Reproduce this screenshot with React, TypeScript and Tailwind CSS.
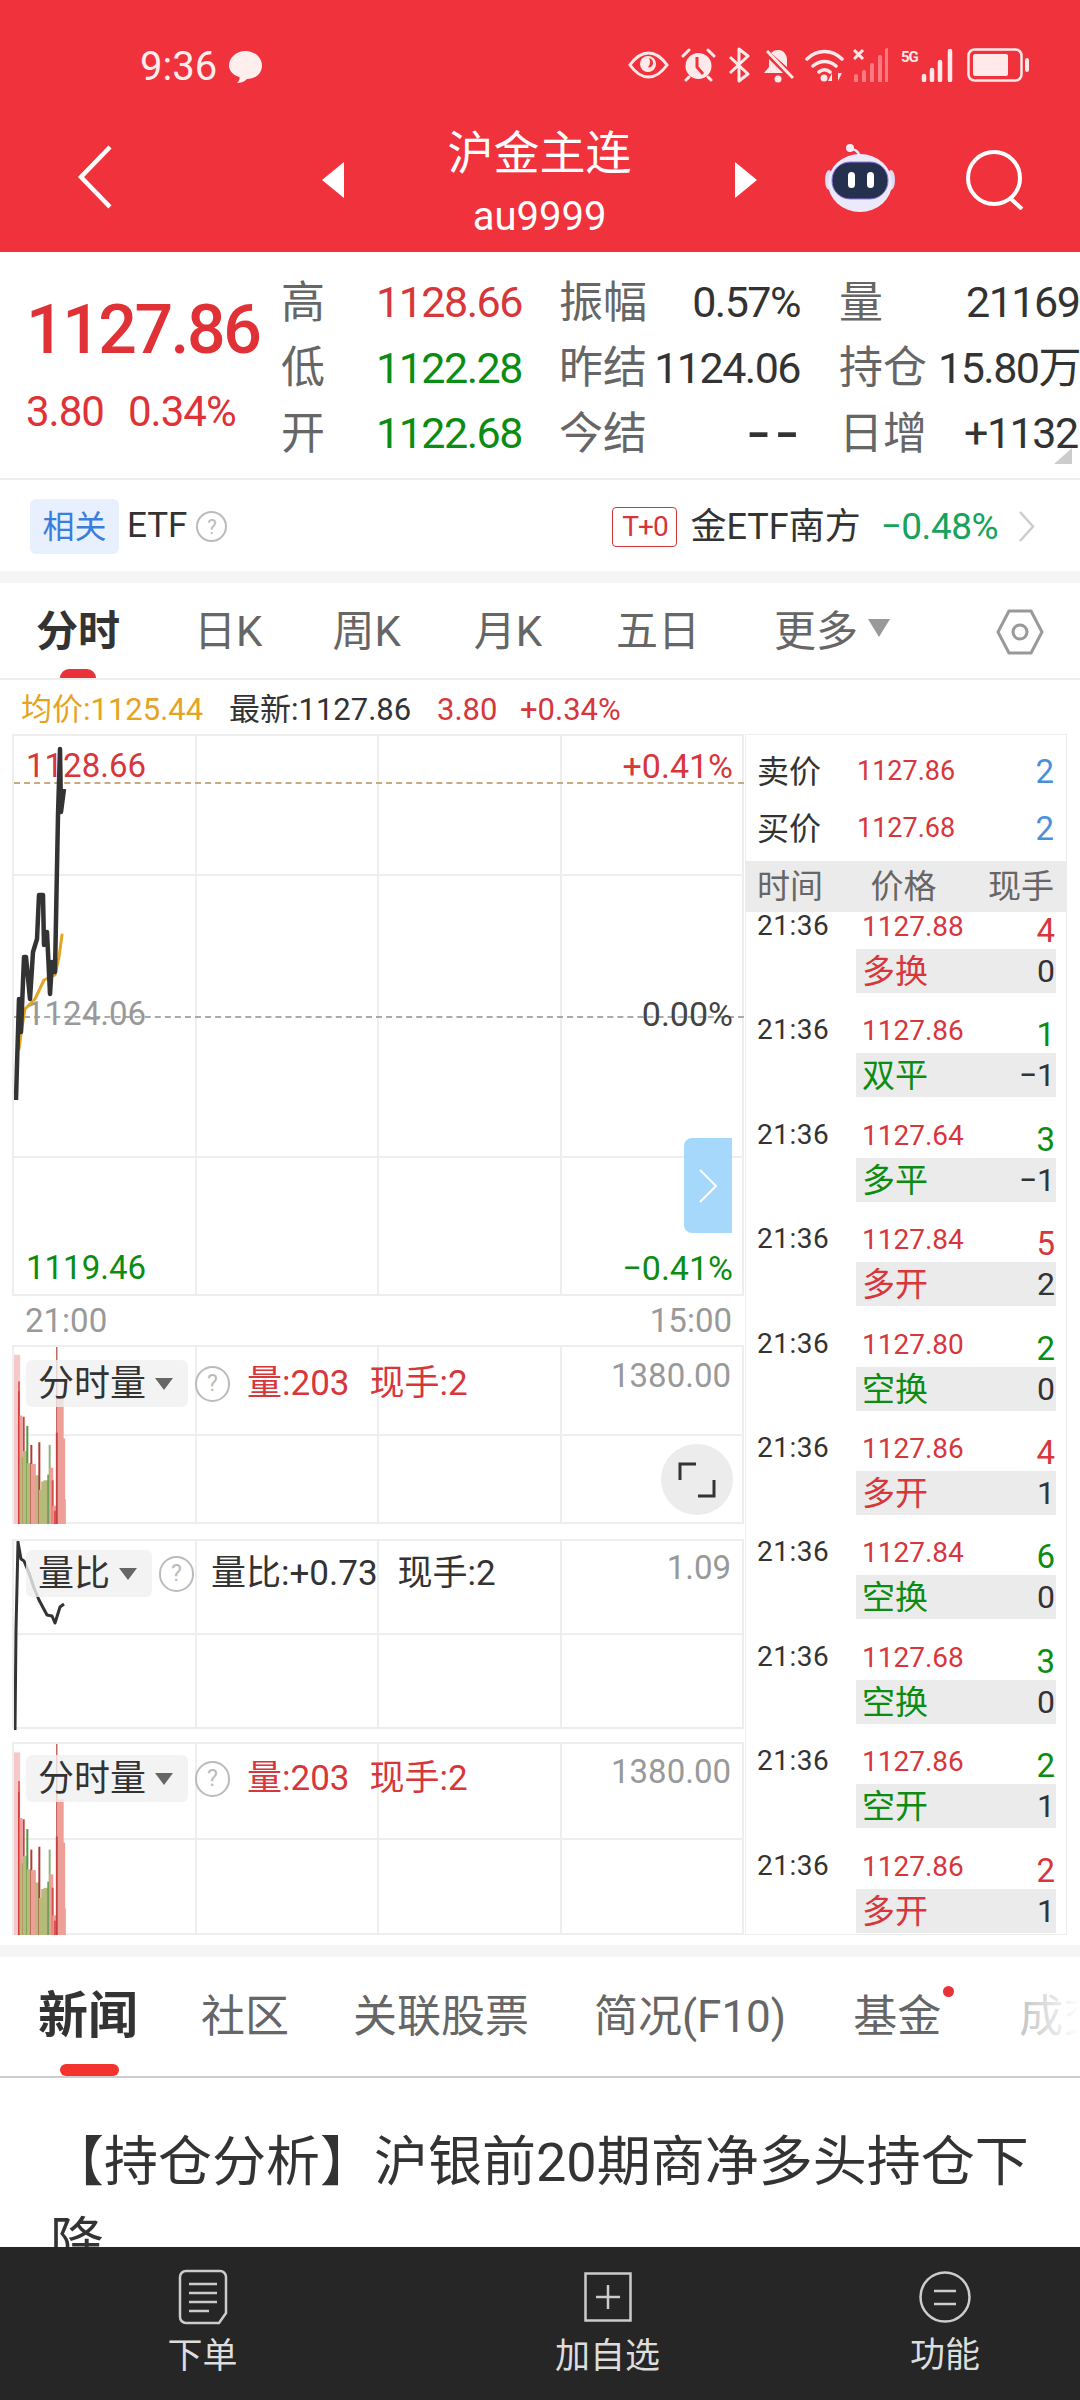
import React from 'react';

const RED = 'text-[#d7363b]';
const GREEN = 'text-[#0b8c12]';

const volBars: [number, number, string, number][] = [
  [44, 35, '#f6c9c9', 7],
  [51, 105, '#e2686a', 2],
  [55, 195, '#ee9f97', 4],
  [60, 305, '#b6bb7c', 5],
  [65, 198, '#c9403f', 2],
  [70, 288, '#b6bb7c', 5],
  [76, 222, '#4f9a42', 2],
  [82, 320, '#b6bb7c', 5],
  [88, 272, '#b23a3a', 2],
  [94, 322, '#ee9f97', 5],
  [100, 365, '#ee9f97', 4],
  [105, 352, '#b6bb7c', 4],
  [112, 265, '#b23a3a', 2],
  [118, 390, '#b6bb7c', 5],
  [125, 368, '#b6bb7c', 5],
  [132, 365, '#b6bb7c', 5],
  [139, 350, '#5d9a4a', 2],
  [143, 272, '#8fb27a', 2],
  [148, 332, '#ee9f97', 4],
  [152, 365, '#d8544f', 2],
  [157, 432, '#ee9f97', 4],
  [163, 445, '#e2504f', 5],
  [169, 240, '#e2504f', 5],
  [176, 150, '#ee9f97', 6],
  [182, 255, '#ee9f97', 5],
  [187, 415, '#ee9f97', 3],
];

const ticks = [
  { time: '21:36', price: '1127.88', qty: '4', qtyColor: RED, tag: '多换', tagColor: RED, change: '0' },
  { time: '21:36', price: '1127.86', qty: '1', qtyColor: GREEN, tag: '双平', tagColor: GREEN, change: '−1' },
  { time: '21:36', price: '1127.64', qty: '3', qtyColor: GREEN, tag: '多平', tagColor: GREEN, change: '−1' },
  { time: '21:36', price: '1127.84', qty: '5', qtyColor: RED, tag: '多开', tagColor: RED, change: '2' },
  { time: '21:36', price: '1127.80', qty: '2', qtyColor: GREEN, tag: '空换', tagColor: GREEN, change: '0' },
  { time: '21:36', price: '1127.86', qty: '4', qtyColor: RED, tag: '多开', tagColor: RED, change: '1' },
  { time: '21:36', price: '1127.84', qty: '6', qtyColor: GREEN, tag: '空换', tagColor: GREEN, change: '0' },
  { time: '21:36', price: '1127.68', qty: '3', qtyColor: GREEN, tag: '空换', tagColor: GREEN, change: '0' },
  { time: '21:36', price: '1127.86', qty: '2', qtyColor: GREEN, tag: '空开', tagColor: GREEN, change: '1' },
  { time: '21:36', price: '1127.86', qty: '2', qtyColor: RED, tag: '多开', tagColor: RED, change: '1' },
];

const statRows = [
  { a: '高', av: '1128.66', ac: RED, b: '振幅', bv: '0.57%', bc: 'text-[#333333]', c: '量', cw: 'w-[127px]', cv: '21169' },
  { a: '低', av: '1122.28', ac: GREEN, b: '昨结', bv: '1124.06', bc: 'text-[#333333]', c: '持仓', cw: 'w-[99px]', cv: '15.80万' },
  { a: '开', av: '1122.68', ac: GREEN, b: '今结', bv: '--', bc: 'mr-[-3px] inline-block origin-right scale-x-[1.5] font-bold tracking-[2px] text-[#333333]', c: '日增', cw: 'w-[125px]', cv: '+1132' },
];

const StatusIcons = () => (
  <div className="flex items-center text-[#ffe9e9]">
    <svg width="41" height="28" viewBox="0 0 41 28" fill="none">
      <path d="M2 14C9 4 15 2 20.500 2S32 4 39 14C32 24 26 26 20.500 26S9 24 2 14Z" stroke="currentColor" strokeWidth="3" />
      <circle cx="20" cy="13" r="8" fill="currentColor" />
      <path d="M21 7c4 1 5 5 3 8-1 1-3 2-4 1 2-2 3-5 1-9Z" fill="#f0323c" />
    </svg>
    <svg className="ml-[12px]" width="35" height="34" viewBox="0 0 35 34" fill="none">
      <circle cx="17.500" cy="18" r="13" fill="currentColor" />
      <path d="M16 9v10l6 7" stroke="#f0323c" strokeWidth="3" />
      <path d="M2 8l6-6M33 8l-6-6M5 32l3-3M30 32l-3-3" stroke="currentColor" strokeWidth="3" strokeLinecap="round" />
    </svg>
    <svg className="ml-[12px]" width="22" height="36" viewBox="0 0 22 36" fill="none">
      <path d="M2 10l18 17-9 7V2l9 7L2 26" stroke="currentColor" strokeWidth="3" strokeLinejoin="round" />
    </svg>
    <svg className="ml-[13px]" width="31" height="35" viewBox="0 0 31 35" fill="none">
      <path d="M15 2c6 0 9 5 9 10v7l-16-14c2-2 4-3 7-3ZM6 11v8l-5 6h19Z" fill="currentColor" />
      <circle cx="15" cy="31" r="3.500" fill="currentColor" />
      <path d="M4 3l26 27" stroke="currentColor" strokeWidth="3" />
    </svg>
    <svg className="ml-[11px]" width="39" height="34" viewBox="0 0 39 34" fill="none">
      <path d="M2 11c10-10 25-10 35 0M8 18c7-6 16-6 23 0M14 24c3-3 8-3 11 0" stroke="currentColor" strokeWidth="3.500" strokeLinecap="round" />
      <circle cx="19" cy="30" r="3.500" fill="currentColor" />
      <path d="M27 33v-8l-4 8ZM33 25v8l4-8Z" fill="currentColor" />
    </svg>
    <svg className="ml-[9px]" width="35" height="34" viewBox="0 0 35 34" fill="none">
      <path d="M1 2l9 9M10 2l-9 9" stroke="currentColor" strokeWidth="3" />
      <path d="M3 28v5M11 24v9M19 17v16M27 9v24M34 2v31" stroke="#ff7a80" strokeWidth="4" strokeLinecap="round" />
    </svg>
    <span className="ml-[13px] mt-[-16px] w-[19px] text-[15px] font-bold leading-[18px] tracking-[-1px]">5G</span>
    <svg className="ml-[1px]" width="33" height="34" viewBox="0 0 33 34" fill="none">
      <path d="M3 28v4M11 22v10M19 14v18M29 3v29" stroke="currentColor" strokeWidth="4.500" strokeLinecap="round" />
    </svg>
    <svg className="ml-[13px]" width="63" height="34" viewBox="0 0 63 34" fill="none">
      <rect x="1.500" y="1.500" width="53" height="31" rx="6" stroke="currentColor" strokeWidth="2.500" />
      <rect x="6" y="6" width="35" height="22" rx="2" fill="currentColor" />
      <rect x="58" y="10" width="4" height="14" rx="2" fill="currentColor" />
    </svg>
  </div>
);

const Robot = () => (
  <svg width="72" height="70" viewBox="0 0 72 70" fill="none">
    <path d="M36 16c0-6-3-9-8-10" stroke="#e8e6f8" strokeWidth="2.500" />
    <circle cx="26" cy="5" r="4" fill="#f1effc" />
    <ellipse cx="5" cy="37" rx="4" ry="10" fill="#dcdcf4" />
    <ellipse cx="67" cy="37" rx="4" ry="10" fill="#dcdcf4" />
    <ellipse cx="36" cy="40" rx="32" ry="29" fill="#eceafa" />
    <rect x="8" y="19" width="56" height="37" rx="18" fill="#25304f" stroke="#8f7be0" strokeWidth="1" />
    <rect x="24" y="29" width="7" height="16" rx="3.500" fill="#ffffff" />
    <rect x="43" y="29" width="7" height="16" rx="3.500" fill="#ffffff" />
  </svg>
);

const HelpMark = () => (
  <span className="flex h-[36px] w-[35px] shrink-0 items-center justify-center rounded-full border-2 border-[#bbbbbb] text-[23px] leading-none text-[#bbbbbb]">?</span>
);

const GridLines = ({ rows, rowsClass }: { rows: number; rowsClass: string }) => (
  <div className={`grid h-full grid-cols-4 ${rowsClass}`}>
    {Array.from({ length: rows * 4 }).map((_, i) => (
      <div key={i} className="border-r-2 border-b-2 border-[#eeeeee]" />
    ))}
  </div>
);

const VolumeBars = ({ height }: { height: number }) => (
  <svg className="absolute left-0 top-0" width="70" height={height} viewBox={`12 0 70 ${height}`} fill="none">
    {volBars.map(([x, top, color, w], i) => {
      const barH = ((480 - top) / 2.6 / 179) * height;
      return <rect key={i} x={x / 3 - w / 2} y={height - barH} width={w} height={barH} fill={color} />;
    })}
    <rect x="16" y={height * 0.25} width="1.500" height={height * 0.75} fill="#d8393c" />
    <rect x="54" y="0" width="1.500" height={height} fill="#b8403f" fillOpacity="0.8" />
  </svg>
);

const VolumeHead = ({ name, headClass, pillClass, label, value, valueColor, helpClass }: { name: string; headClass: string; pillClass: string; label: string; value: string; valueColor: string; helpClass: string }) => (
  <div className={`absolute left-[12px] flex items-center ${headClass}`}>
    <div className={`flex h-[47px] items-center rounded-[6px] bg-[#f0f0f0]/80 pl-[12px] text-[36px] text-[#333333] ${pillClass}`}>
      {name}
      <span className="ml-[9px] h-0 w-0 border-x-[9px] border-t-[12px] border-x-transparent border-t-[#666666]" />
    </div>
    <div className={helpClass}>
      <HelpMark />
    </div>
    <span className={`ml-[17px] text-[35px] leading-[47px] ${valueColor}`}>{label}</span>
    <span className={`ml-[20px] text-[35px] leading-[47px] ${valueColor}`}>{value}</span>
  </div>
);

const MainChart = () => (
  <div className="relative h-[562px] w-[732px] border-t-2 border-l-2 border-[#eeeeee]">
    <GridLines rows={3} rowsClass="grid-rows-[140px_282px_138px]" />
    <div className="absolute left-0 right-0 top-[46px] border-t-2 border-dashed border-[#c9aa80]" />
    <div className="absolute left-0 right-0 top-[280px] border-t-2 border-dashed border-[#aaaaaa]" />
    <span className={`absolute left-[12px] top-[10px] text-[33px] leading-[40px] ${RED}`}>1128.66</span>
    <span className={`absolute right-[11px] top-[10px] text-[34px] leading-[40px] ${RED}`}>+0.41%</span>
    <span className="absolute left-[12px] top-[258px] text-[33px] leading-[40px] text-[#999999]">1124.06</span>
    <span className="absolute right-[11px] top-[258px] text-[34px] leading-[40px] text-[#444444]">0.00%</span>
    <span className={`absolute left-[12px] top-[512px] text-[33px] leading-[40px] ${GREEN}`}>1119.46</span>
    <span className={`absolute right-[11px] top-[512px] text-[34px] leading-[40px] ${GREEN}`}>−0.41%</span>
    <svg className="absolute left-0 top-0" width="70" height="400" viewBox="12 734 70 400" fill="none">
      <path d="M17 1047L20 1025L23 1007L33 997L42 978L53 973L57 955L60 933" stroke="#e2a526" strokeWidth="3" strokeLinejoin="round" strokeLinecap="round" />
      <path d="M14 1098L15 1063L17 997L19 1030L22 955L24 955L28 997L31 950L35 937L37 893L41 893L42 943L45 930L48 992L50 960L53 970L56 813L58 747L59 810L62 787" stroke="#333333" strokeWidth="4.500" strokeLinejoin="round" />
    </svg>
    <div className="absolute left-[670px] top-[402px] flex h-[95px] w-[48px] items-center justify-center rounded-l-[8px] bg-[#a6d8fb]">
      <svg width="20" height="36" viewBox="0 0 20 36" fill="none">
        <path d="M2 2l16 16L2 34" stroke="#ffffff" strokeWidth="2" />
      </svg>
    </div>
  </div>
);

const LeftColumn = () => (
  <div className="w-[745px] shrink-0 pl-[12px]">
    <MainChart />
    <div className="flex h-[49px] w-[732px] items-center justify-between pl-[13px] pr-[12px] text-[33px] text-[#999999]">
      <span>21:00</span>
      <span>15:00</span>
    </div>
    <div className="relative h-[179px] w-[732px] border-t-2 border-l-2 border-[#eeeeee]">
      <GridLines rows={2} rowsClass="grid-rows-2" />
      <VolumeBars height={177} />
      <VolumeHead name="分时量" headClass="top-[13px]" pillClass="w-[162px]" label="量:203" value="现手:2" valueColor={RED} helpClass="ml-[7px]" />
      <span className="absolute right-[13px] top-[12px] text-[33px] leading-[34px] text-[#999999]">1380.00</span>
      <div className="absolute left-[647px] top-[97px] flex h-[71px] w-[72px] items-center justify-center rounded-full bg-[#ececec]">
        <svg width="38" height="36" viewBox="0 0 38 36" fill="none">
          <path d="M2 18V2h16M36 18v16H20" stroke="#333333" strokeWidth="3" />
        </svg>
      </div>
    </div>
    <div className="relative mt-[15px] h-[190px] w-[732px] border-t-2 border-l-2 border-[#eeeeee]">
      <GridLines rows={2} rowsClass="grid-rows-2" />
      <svg className="absolute left-0 top-0" width="70" height="190" viewBox="12 1539 70 190" fill="none">
        <path d="M13 1728L14 1628L16 1540L19 1557L22 1559L27 1571L32 1586L37 1598L45 1613L50 1614L53 1621L58 1605L62 1602" stroke="#333333" strokeWidth="3" strokeLinejoin="round" />
      </svg>
      <VolumeHead name="量比" headClass="top-[9px]" pillClass="w-[126px]" label="量比:+0.73" value="现手:2" valueColor="text-[#333333]" helpClass="ml-[7px]" />
      <span className="absolute right-[13px] top-[10px] text-[33px] leading-[34px] text-[#999999]">1.09</span>
    </div>
    <div className="relative mt-[13px] h-[193px] w-[732px] border-t-2 border-l-2 border-[#eeeeee]">
      <GridLines rows={2} rowsClass="grid-rows-2" />
      <VolumeBars height={191} />
      <VolumeHead name="分时量" headClass="top-[11px]" pillClass="w-[162px]" label="量:203" value="现手:2" valueColor={RED} helpClass="ml-[7px]" />
      <span className="absolute right-[13px] top-[11px] text-[33px] leading-[34px] text-[#999999]">1380.00</span>
    </div>
  </div>
);

const TradePanel = () => (
  <div className="h-[1201px] w-[322px] shrink-0 overflow-hidden border border-[#eeeeee]">
    <div className="h-[126px] pt-[8px]">
      <div className="flex h-[57px] items-center pl-[11px] pr-[12px]">
        <span className="w-[100px] text-[32px] text-[#333333]">卖价</span>
        <span className={`flex-1 text-[27px] ${RED}`}>1127.86</span>
        <span className="text-[33px] text-[#4a90d9]">2</span>
      </div>
      <div className="flex h-[57px] items-center pl-[11px] pr-[12px]">
        <span className="w-[100px] text-[32px] text-[#333333]">买价</span>
        <span className={`flex-1 text-[27px] ${RED}`}>1127.68</span>
        <span className="text-[33px] text-[#4a90d9]">2</span>
      </div>
    </div>
    <div className="flex h-[51px] items-center justify-between bg-[#ebebeb] pl-[11px] pr-[12px] text-[33px] text-[#666666]">
      <span>时间</span>
      <span className="ml-[-4px]">价格</span>
      <span>现手</span>
    </div>
    {ticks.map((t, i) => (
      <div key={i} className="h-[104.400px]">
        <div className="flex h-[37px] items-start pl-[11px] pr-[11px]">
          <span className="w-[105px] text-[28px] leading-[28px] tracking-[0.5px] text-[#333333]">{t.time}</span>
          <span className={`flex-1 text-[28px] leading-[30px] ${RED}`}>{t.price}</span>
          <span className={`mt-[2px] text-[33px] leading-[34px] ${t.qtyColor}`}>{t.qty}</span>
        </div>
        <div className="ml-[110px] mr-[10px] flex h-[44px] items-center justify-between bg-[#ebebeb] pl-[6px] pr-[1px]">
          <span className={`mt-[2px] text-[33px] leading-[44px] ${t.tagColor}`}>{t.tag}</span>
          <span className="text-[32px] leading-[44px] text-[#333333]">{t.change}</span>
        </div>
      </div>
    ))}
  </div>
);

export default function App() {
  return (
    <div className="relative flex h-[2400px] w-[1080px] flex-col overflow-hidden bg-white font-['Roboto','Noto_Sans_CJK_SC',sans-serif]">
      <header className="h-[252px] shrink-0 bg-[#f0323c] text-white">
        <div className="flex h-[130px] items-center justify-between pl-[140px] pr-[50px]">
          <div className="mt-[3px] flex items-center text-[#ffeeee]">
            <span className="text-[40px] leading-none">9:36</span>
            <svg className="ml-[11px]" width="35" height="34" viewBox="0 0 35 34">
              <path d="M17.500 1C27 1 34 8 34 15.500C34 24 27 29 19 29C16 32 12 33 9 33C11 31 12 29 11.500 27C5 25 1 21 1 15.500C1 8 8 1 17.500 1Z" fill="currentColor" />
            </svg>
          </div>
          <StatusIcons />
        </div>
        <div className="flex h-[122px] items-start">
          <svg className="ml-[77px] mt-[15px] shrink-0" width="36" height="64" viewBox="0 0 36 64" fill="none">
            <path d="M33 2L4 32l29 30" stroke="#ffffff" strokeWidth="4.500" />
          </svg>
          <span className="ml-[209px] mt-[32px] h-0 w-0 border-y-[18px] border-r-[22px] border-y-transparent border-r-white" />
          <div className="mt-[-5px] flex w-[391px] flex-col items-center">
            <span className="text-[46px] leading-[56px]">沪金主连</span>
            <span className="mt-[8px] text-[40px] leading-[56px]">au9999</span>
          </div>
          <span className="mt-[32px] h-0 w-0 border-y-[18px] border-l-[22px] border-y-transparent border-l-white" />
          <div className="ml-[67px] mt-[13px]">
            <Robot />
          </div>
          <svg className="ml-[70px] mt-[20px]" width="60" height="60" viewBox="0 0 60 60" fill="none">
            <circle cx="28" cy="28" r="26" stroke="#ffffff" strokeWidth="4" />
            <path d="M44 48l12 11" stroke="#ffffff" strokeWidth="4" />
          </svg>
        </div>
      </header>

      <section className="flex h-[228px] shrink-0 border-b-2 border-[#eeeeee]">
        <div className="w-[281px] shrink-0 pl-[26px] pt-[43px]">
          <div className="text-[68px] font-medium leading-[70px] tracking-[-2.500px] text-[#e03236]">1127.86</div>
          <div className="mt-[25px] flex text-[42px] leading-[44px] tracking-[-1px] text-[#e03236]">
            <span className="w-[102px]">3.80</span>
            <span>0.34%</span>
          </div>
        </div>
        <div className="relative flex-1 overflow-hidden pt-[18px]">
          {statRows.map((r) => (
            <div key={r.a} className="grid h-[65.500px] grid-cols-[95px_183px_241px_39px_241px] items-center whitespace-nowrap text-[43px] leading-none tracking-[-1.500px]">
              <span className="text-[44px] tracking-normal text-[#666666]">{r.a}</span>
              <span className={r.ac}>{r.av}</span>
              <div className="flex items-center justify-between">
                <span className="text-[44px] tracking-normal text-[#666666]">{r.b}</span>
                <span className={r.bc}>{r.bv}</span>
              </div>
              <span />
              <div className="flex items-center">
                <span className={`shrink-0 text-[44px] tracking-normal text-[#666666] ${r.cw}`}>{r.c}</span>
                <span className="shrink-0 text-[#333333]">{r.cv}</span>
              </div>
            </div>
          ))}
          <span className="absolute bottom-[14px] right-[8px] h-0 w-0 border-b-[16px] border-l-[18px] border-b-[#cccccc] border-l-transparent" />
        </div>
      </section>

      <section className="flex h-[91px] shrink-0 items-center pl-[30px] pt-[2px]">
        <span className="flex h-[55px] w-[89px] items-center justify-center rounded-[6px] bg-[#e8f0fe] text-[32px] text-[#3b7ddd]">相关</span>
        <span className="ml-[8px] text-[35px] text-[#333333]">ETF</span>
        <span className="ml-[9px] flex h-[31px] w-[31px] items-center justify-center rounded-full border-2 border-[#bbbbbb] text-[20px] leading-none text-[#bbbbbb]">?</span>
        <span className="ml-[385px] flex h-[40px] w-[65px] items-center justify-center rounded-[4px] border border-[#d8343a] text-[28px] tracking-[-1px] text-[#d8343a]">T+0</span>
        <span className="ml-[13px] text-[36px] text-[#333333]">金ETF南方</span>
        <span className="ml-[20px] text-[37px] tracking-[-0.500px] text-[#17a35b]">−0.48%</span>
        <svg className="ml-[20px]" width="17" height="33" viewBox="0 0 17 33" fill="none">
          <path d="M2 2l13 14.500L2 31" stroke="#cccccc" strokeWidth="2.500" />
        </svg>
      </section>

      <div className="h-[12px] shrink-0 bg-[#f5f5f5]" />

      <nav className="relative flex h-[97px] shrink-0 items-center border-b-2 border-[#eeeeee] pl-[36px] pt-[2px] text-[42px] text-[#666666]">
        <span className="font-bold text-[#333333]">分时</span>
        <span className="ml-[74px]">日K</span>
        <span className="ml-[70px]">周K</span>
        <span className="ml-[73px]">月K</span>
        <span className="ml-[74px]">五日</span>
        <span className="ml-[74px]">更多</span>
        <span className="ml-[10px] mt-[-8px] h-0 w-0 border-x-[11px] border-t-[18px] border-x-transparent border-t-[#999999]" />
        <svg className="ml-[106px]" width="48" height="46" viewBox="0 0 48 46" fill="none">
          <path d="M13 2h22l11 21-11 21H13L2 23Z" stroke="#999999" strokeWidth="3" strokeLinejoin="round" />
          <circle cx="24" cy="23" r="7" stroke="#999999" strokeWidth="3" />
        </svg>
        <span className="absolute bottom-[0px] left-[60px] h-[9px] w-[36px] rounded-t-full bg-[#e8323a]" />
      </nav>

      <div className="flex h-[54px] shrink-0 items-center pl-[21px] pt-[4px] text-[31px] leading-none">
        <span className="w-[208px] text-[#e5a41f]">均价:1125.44</span>
        <span className="w-[208px] text-[#333333]">最新:1127.86</span>
        <span className={`w-[83px] ${RED}`}>3.80</span>
        <span className={RED}>+0.34%</span>
      </div>

      <main className="flex h-[1211px] shrink-0">
        <LeftColumn />
        <TradePanel />
      </main>

      <div className="h-[12px] shrink-0 bg-[#f5f5f5]" />

      <nav className="relative flex h-[121px] shrink-0 items-center overflow-hidden whitespace-nowrap border-b-2 border-[#cccccc] pl-[38px] text-[44px] text-[#666666]">
        <span className="shrink-0 text-[50px] font-bold text-[#333333]">新闻</span>
        <span className="ml-[63px] shrink-0">社区</span>
        <span className="ml-[64px] shrink-0">关联股票</span>
        <span className="ml-[65px] shrink-0">简况(F10)</span>
        <span className="ml-[67px] shrink-0">基金</span>
        <span className="ml-[78px] shrink-0">成交</span>
        <span className="absolute left-[943px] top-[29px] h-[11px] w-[11px] rounded-full bg-[#e8323a]" />
        <span className="absolute right-0 top-0 h-[100px] w-[62px] bg-gradient-to-r from-white/60 to-white" />
        <span className="absolute bottom-[0px] left-[60px] h-[12px] w-[59px] rounded-[6px] bg-[#f4332f]" />
      </nav>

      <div className="flex-1 overflow-hidden pl-[50px] pr-[30px] pt-[44px] text-[54px] leading-[81px] text-[#333333]">
        【持仓分析】沪银前20期商净多头持仓下降
      </div>

      <footer className="grid h-[153px] shrink-0 grid-cols-[405px_405px_270px] bg-[#262626] text-[35px] text-[#dddddd]">
        <div className="flex flex-col items-center">
          <svg className="mt-[22px]" width="50" height="56" viewBox="0 0 50 56" fill="none">
            <path d="M8 2h34a6 6 0 0 1 6 6v36l-7 10H8a6 6 0 0 1-6-6V8a6 6 0 0 1 6-6Z" stroke="#cccccc" strokeWidth="2.500" />
            <path d="M11 15h28M11 24h28M11 33h28M11 42h20" stroke="#cccccc" strokeWidth="2.500" />
          </svg>
          <span className="mt-[8px] leading-[48px]">下单</span>
        </div>
        <div className="flex flex-col items-center">
          <svg className="mt-[25px]" width="48" height="50" viewBox="0 0 48 50" fill="none">
            <rect x="1.500" y="1.500" width="45" height="47" stroke="#cccccc" strokeWidth="2.500" />
            <path d="M24 13v24M12 25h24" stroke="#cccccc" strokeWidth="2.500" />
          </svg>
          <span className="mt-[11px] leading-[48px]">加自选</span>
        </div>
        <div className="flex flex-col items-center">
          <svg className="mt-[24px]" width="52" height="52" viewBox="0 0 52 52" fill="none">
            <circle cx="26" cy="26" r="24.500" stroke="#cccccc" strokeWidth="2.500" />
            <path d="M15 20h22M15 33h22" stroke="#cccccc" strokeWidth="2.500" />
          </svg>
          <span className="mt-[9px] leading-[48px]">功能</span>
        </div>
      </footer>
    </div>
  );
}
